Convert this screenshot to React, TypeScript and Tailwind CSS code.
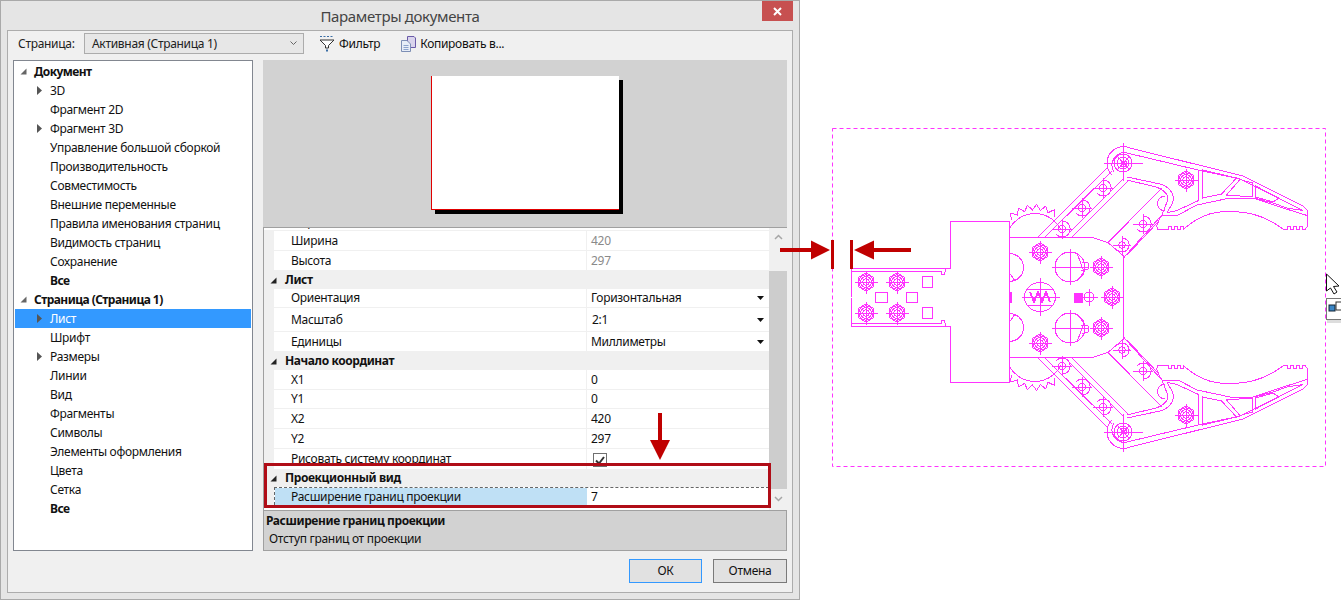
import React from "react";

const treeRows = [
  { label: "Документ", bold: true, open: true },
  { label: "3D", arrow: true },
  { label: "Фрагмент 2D" },
  { label: "Фрагмент 3D", arrow: true },
  { label: "Управление большой сборкой" },
  { label: "Производительность" },
  { label: "Совместимость" },
  { label: "Внешние переменные" },
  { label: "Правила именования страниц" },
  { label: "Видимость страниц" },
  { label: "Сохранение" },
  { label: "Все", leafBold: true },
  { label: "Страница (Страница 1)", bold: true, open: true },
  { label: "Лист", arrow: true, selected: true },
  { label: "Шрифт" },
  { label: "Размеры", arrow: true },
  { label: "Линии" },
  { label: "Вид" },
  { label: "Фрагменты" },
  { label: "Символы" },
  { label: "Элементы оформления" },
  { label: "Цвета" },
  { label: "Сетка" },
  { label: "Все", leafBold: true },
];

const OpenMark = ({ className }: { className: string }) => (
  <svg width="7" height="7" viewBox="0 0 7 7" className={className}>
    <path d="M6.5 0.5V6.5H0.5Z" fill="currentColor" />
  </svg>
);

const ClosedMark = () => (
  <svg width="5" height="9" viewBox="0 0 5 9" className="text-[#555]">
    <path d="M0 0L5 4.5L0 9Z" fill="currentColor" />
  </svg>
);

const TreeRow = ({ row }: { row: (typeof treeRows)[number] }) => {
  if (row.bold) {
    return (
      <div className="h-[19px] flex items-center pl-[5px] font-bold text-[#111] tracking-[-0.55px]">
        <OpenMark className="text-[#666] w-[7px]" />
        <span className="ml-[7px]">{row.label}</span>
      </div>
    );
  }
  return (
    <div className={`h-[19px] flex items-center ${row.selected ? "bg-[#3399ff] text-white" : "text-[#111]"}`}>
      <div className="w-[35px] pl-[22px] flex items-center shrink-0">{row.arrow && <ClosedMark />}</div>
      <span className={row.leafBold ? "font-bold tracking-[-0.55px]" : ""}>{row.label}</span>
    </div>
  );
};

const DropMark = () => (
  <svg width="7" height="4" viewBox="0 0 7 4" className="absolute right-[5px] top-1/2 -mt-[2px]">
    <path d="M0 0H7L3.5 4Z" fill="#111" />
  </svg>
);

const PropRow = ({
  label,
  value,
  height,
  gray,
  drop,
  inset,
}: {
  label: string;
  value?: string;
  height: string;
  gray?: boolean;
  drop?: boolean;
  inset?: boolean;
}) => (
  <div className={`flex ${height} shrink-0`}>
    <div className="w-[10px] bg-[#f0f0f0] shrink-0" />
    <div className="flex-1 flex bg-white border-b border-[#f0f0f0]">
      <div className="w-[313px] pl-[17px] flex items-center border-r border-[#f0f0f0] text-[#111]">{label}</div>
      <div className={`relative flex-1 flex items-center ${inset ? "pl-[5px]" : "pl-[4px]"} ${gray ? "text-[#8a8a8a]" : "text-[#111]"}`}>
        {value}
        {drop && <DropMark />}
      </div>
    </div>
  </div>
);

const PropHeader = ({ label }: { label: string }) => (
  <div className="h-[18px] shrink-0 bg-[#f0f0f0] flex items-center pl-[6px] font-bold text-[#111] tracking-[-0.4px]">
    <OpenMark className="text-[#222] w-[7px]" />
    <span className="ml-[8px]">{label}</span>
  </div>
);

const FilterIcon = () => (
  <svg width="16" height="18" viewBox="0 0 16 18" className="shrink-0">
    <path d="M1 1.5H15" stroke="#3b6ea5" strokeDasharray="2 1.5" />
    <path d="M1 5H15L9.5 10.5V13H6.5V10.5Z" fill="#fff" stroke="#333" />
    <path d="M7 15.5H9" stroke="#3b6ea5" strokeWidth="2" />
  </svg>
);

const CopyIcon = () => (
  <svg width="15" height="16" viewBox="0 0 15 16" className="shrink-0">
    <path d="M6.5 0.5H13L14.5 2V11.5H6.5Z" fill="#d9d4ec" stroke="#6a5aa8" />
    <path d="M0.5 4.5H6L9.5 8V15.5H0.5Z" fill="#e7edf7" stroke="#7d8fb5" />
    <path d="M2.5 9.5H7.5M2.5 11.5H7.5M2.5 13.5H7.5" stroke="#8da3cc" />
  </svg>
);

const Dialog = () => (
  <div className="w-[800px] h-[600px] shrink-0 border border-[#a9a9a9] bg-[#e5e5e5] px-[6px] pb-[6px] flex flex-col">
    <div className="h-[29px] shrink-0 flex items-start">
      <div className="w-[31px]" />
      <div className="flex-1 text-center text-[15px] leading-[30px] text-[#444] tracking-[-0.35px]">Параметры документа</div>
      <div className="w-[31px] h-[20px] bg-[#c75050] flex items-center justify-center">
        <svg width="9" height="9" viewBox="0 0 9 9">
          <path d="M1 1L8 8M8 1L1 8" stroke="#fff" strokeWidth="2" />
        </svg>
      </div>
    </div>
    <div className="flex-1 border border-[#acacac] bg-[#f0f0f0] px-[5px] flex flex-col min-h-0">
      <div className="h-[21px] mt-[2px] shrink-0 flex items-center">
        <span className="w-[71px] pl-[5px] text-[#222]">Страница:</span>
        <div className="relative w-[220px] h-[21px] border border-[#acacac] bg-[#e7e7e7] flex items-center pl-[7px] text-[#222]">
          Активная (Страница 1)
          <svg width="7" height="5" viewBox="0 0 7 5" className="absolute right-[6px] top-[7px]">
            <path d="M0.5 0.5L3.5 3.5L6.5 0.5" stroke="#666" fill="none" />
          </svg>
        </div>
        <div className="ml-[15px] flex items-center gap-[4px] text-[#111]">
          <FilterIcon />
          Фильтр
        </div>
        <div className="ml-[21px] flex items-center gap-[4px] text-[#111]">
          <CopyIcon />
          Копировать в...
        </div>
      </div>
      <div className="flex mt-[6px] h-[491px] shrink-0">
        <div className="w-[240px] shrink-0 border border-[#828790] bg-white p-[1px]">
          {treeRows.map((row, i) => (
            <TreeRow key={i} row={row} />
          ))}
        </div>
        <div className="ml-[10px] flex-1 flex flex-col min-w-0">
          <div className="h-[167px] shrink-0 bg-[#d2d2d2] pl-[168px] pt-[16px]">
            <div className="w-[188px] h-[134px] bg-white border-l border-b border-[#e00000] shadow-[4px_4px_0_#000]" />
          </div>
          <div className="relative h-[283px] shrink-0 flex border-t border-l border-[#a0a0a0] bg-white">
            <div className="flex-1 flex flex-col min-w-0">
              <div className="h-[3px] shrink-0 overflow-hidden flex items-end pl-[27px] border-b border-[#f0f0f0] text-[#111]">
                <span className="shrink-0 leading-[16px]">Формат</span>
              </div>
              <PropRow label="Ширина" value="420" gray height="h-[20px]" />
              <PropRow label="Высота" value="297" gray height="h-[20px]" />
              <PropHeader label="Лист" />
              <PropRow label="Ориентация" value="Горизонтальная" drop height="h-[19px]" />
              <PropRow label="Масштаб" value="2:1" drop inset height="h-[24px]" />
              <PropRow label="Единицы" value="Миллиметры" drop height="h-[20px]" />
              <PropHeader label="Начало координат" />
              <PropRow label="X1" value="0" height="h-[20px]" />
              <PropRow label="Y1" value="0" height="h-[19px]" />
              <PropRow label="X2" value="420" height="h-[20px]" />
              <PropRow label="Y2" value="297" height="h-[20px]" />
              <div className="flex h-[20px] shrink-0">
                <div className="w-[10px] bg-[#f0f0f0] shrink-0" />
                <div className="flex-1 flex bg-white">
                  <div className="w-[313px] pl-[17px] flex items-center border-r border-[#f0f0f0] text-[#111]">Рисовать систему координат</div>
                  <div className="pl-[6px] pt-[4px]">
                    <div className="w-[14px] h-[14px] border border-[#707070] flex items-center justify-center">
                      <svg width="10" height="9" viewBox="0 0 10 9">
                        <path d="M1 4.5L4 7.5L9 1" stroke="#333" strokeWidth="2" fill="none" />
                      </svg>
                    </div>
                  </div>
                </div>
              </div>
              <PropHeader label="Проекционный вид" />
              <div className="flex h-[18px] shrink-0">
                <div className="w-[10px] bg-[#f0f0f0] shrink-0" />
                <div className="flex-1 flex border-t border-l border-dashed border-[#666]">
                  <div className="w-[312px] pl-[16px] flex items-center bg-[#bfe0f5] text-[#111]">Расширение границ проекции</div>
                  <div className="flex-1 pl-[4px] flex items-center bg-white text-[#111]">7</div>
                </div>
              </div>
            </div>
            <div className="w-[18px] shrink-0 flex flex-col items-center bg-[#f0f0f0]">
              <div className="h-[43px] w-full flex justify-center pt-[6px]">
                <svg width="9" height="6" viewBox="0 0 9 6">
                  <path d="M1 5L4.5 1.5L8 5" stroke="#a6a6a6" strokeWidth="1.5" fill="none" />
                </svg>
              </div>
              <div className="h-[218px] w-full bg-[#cdcdcd]" />
              <div className="flex-1 w-full flex justify-center pt-[7px]">
                <svg width="9" height="6" viewBox="0 0 9 6">
                  <path d="M1 1L4.5 4.5L8 1" stroke="#a6a6a6" strokeWidth="1.5" fill="none" />
                </svg>
              </div>
            </div>
            <div className="absolute left-0 top-[235px] w-[507px] h-[45px] border-[3px] border-[#b00d17]" />
            <svg width="22" height="48" viewBox="0 0 22 48" className="absolute left-[385px] top-[185px]">
              <path d="M9 0H13V27H21L11 47L1 27H9Z" fill="#c00000" />
            </svg>
          </div>
          <div className="flex-1 border border-[#a0a0a0] bg-[#d2d2d2] text-[#111] leading-[17px] pt-[1px]">
            <div className="pl-[2px] font-bold tracking-[-0.4px]">Расширение границ проекции</div>
            <div className="pl-[5px] mt-[1px]">Отступ границ от проекции</div>
          </div>
        </div>
      </div>
      <div className="flex justify-end mt-[8px] gap-[11px]">
        <div className="w-[73px] h-[24px] border border-[#3399ff] bg-[#e1e1e1] flex items-center justify-center text-[#111]">ОК</div>
        <div className="w-[74px] h-[24px] border border-[#7a7a7a] bg-[#e1e1e1] flex items-center justify-center text-[#111]">Отмена</div>
      </div>
    </div>
  </div>
);

const Bolt = ({ x, y, r = 9 }: { x: number; y: number; r?: number }) => {
  const hex = [0, 1, 2, 3, 4, 5]
    .map((i) => {
      const a = (Math.PI / 3) * i + Math.PI / 6;
      return `${x + r * Math.cos(a)},${y + r * Math.sin(a)}`;
    })
    .join(" ");
  return (
    <g>
      <polygon points={hex} />
      <circle cx={x} cy={y} r={r * 0.8} />
      <circle cx={x} cy={y} r={r * 0.6} />
      <circle cx={x} cy={y} r={r * 0.35} />
      <path d={`M${x - r - 2.5} ${y}H${x + r + 2.5}M${x} ${y - r - 2.5}V${y + r + 2.5}`} />
    </g>
  );
};

const Hole = ({ x, y, r = 8 }: { x: number; y: number; r?: number }) => (
  <g>
    <path d={`M${x} ${y - r}A${r} ${r} 0 1 1 ${x - r * 0.7} ${y + r * 0.7}`} />
    <circle cx={x} cy={y} r={r * 0.45} />
    <path d={`M${x - r - 2} ${y}H${x + r + 2}M${x} ${y - r - 2}V${y + r + 2}`} />
  </g>
);

const gearPath = (() => {
  const pts: string[] = [];
  const steps = 6;
  const from = -136;
  const to = -53;
  for (let i = 0; i <= steps * 4; i++) {
    const deg = from + ((to - from) * i) / (steps * 4);
    const rad = i % 4 === 2 ? 38.5 : i % 4 === 0 ? 33 : 35.5;
    const a = (deg * Math.PI) / 180;
    pts.push(`${(1035 + rad * Math.cos(a)).toFixed(1)} ${(243 + rad * Math.sin(a)).toFixed(1)}`);
  }
  return "M" + pts.join("L");
})();

const teeth = (fromX: number, toX: number) => {
  let d = `M${fromX} 229.5`;
  for (let x = fromX; x > toX; x -= 6) {
    d += `V226.5H${x - 3}V229.5H${x - 6}`;
  }
  return d;
};

const TopHalf = () => (
  <g>
    <path d="M851.5 297V268.5H950.5M851.5 271.5H941.5V274.5H944.5L945.5 269" />
    <Bolt x={866} y={282} />
    <Bolt x={897} y={282} />
    <rect x="922.5" y="276.5" width="10" height="11" />

    <path d="M1009.5 228.5A29 29 0 0 1 1061 230" />
    <path d={gearPath} />

    <path d="M1009.5 253.5A14 14 0 0 1 1009.5 281.5" />
    <path d="M1009.5 273L1015 281" />
    <Bolt x={1040} y={252} />
    <Bolt x={1101} y={267} />
    <circle cx="1070" cy="267" r="15" />
    <path d="M1052 267H1088M1070 249V285" />
    <path d="M1077 253L1084 272L1078 280" />
    <path d="M1082 262H1085A4 4 0 0 1 1085 270H1081" />

    <path d="M1009.5 237.5H1093L1108.5 243L1123.5 256V297" />

    <path d="M1038 237L1108 167M1045 237L1112 171M1065 237L1124 178M1072 237L1128 181" />
    <Hole x={1062} y={229} />
    <Hole x={1082} y={208} />
    <Hole x={1103} y={188} />

    <path d="M1108.5 242L1162 188M1123.5 258L1160 217M1127 255L1158 222" />
    <Hole x={1143} y={224} />
    <Hole x={1122} y={245} r={7} />
    <path d="M1165 196A7.5 7.5 0 1 0 1165 211" />

    <path d="M1130 148L1243 176L1303 206L1307 210V227L1305 229.5H1302" />
    <path d={teeth(1302, 1284)} />
    <path d="M1284 229.5L1280 227C1262 214 1245 211.5 1228 211.5C1210 211.5 1198 217 1183 229.5" />
    <path d={teeth(1183, 1165)} />
    <path d="M1165 229.5H1158L1156.5 226L1160 218L1162 215H1178L1197 205L1230 198H1253L1280 207L1307 215.5" />
    <path d="M1127 153L1198 170L1240 179L1303 210.5L1287 208L1273 203L1254 198" />
    <path d="M1198.5 170V200.5L1177 210.5L1167 212.7" />
    <path d="M1127 177L1160 184C1170 187 1176 195 1172 204L1167 213" />
    <path d="M1127 180L1156 187C1165 190 1170 196 1167 202L1162 215" />
    <path d="M1202.5 170L1236.5 178L1221.5 194L1202.5 198Z" />
    <path d="M1240 179.5L1252.5 183V197L1226.5 195Z" />
    <path d="M1255.5 186L1279 198L1273 202L1255.5 197Z" />

    <path d="M1130 148A16.5 16.5 0 0 0 1112 175M1127 153A12.5 12.5 0 0 0 1114 172" />
    <circle cx="1123" cy="163" r="9" />
    <circle cx="1123" cy="163" r="6" />
    <circle cx="1124" cy="164" r="3" />
    <path d="M1104 163H1143M1123.5 143V181M1117 156L1130 170M1130 156L1117 170" />
    <Bolt x={1186} y={180} r={9} />
  </g>
);

const Drawing = () => (
  <svg width="541" height="600" viewBox="800 0 541 600" className="shrink-0">
    <rect x="832.5" y="128.5" width="493" height="338" fill="none" stroke="#ff33ff" strokeDasharray="4 3" />
    <g fill="none" stroke="#ff33ff" strokeWidth="1" shapeRendering="crispEdges">
      <TopHalf />
      <g transform="matrix(1 0 0 -1 0 595)">
        <TopHalf />
      </g>
      <path d="M950.5 268.5V221.5H1009.5V382.5H950.5V326" />
      <path d="M875.5 292.5H887.5V302.5H875.5ZM906.5 292.5H917.5V302.5H906.5Z" />
      <ellipse cx="1040" cy="297" rx="15.5" ry="14.5" />
      <path d="M1022 297H1060M1040 278V316M1027 289H1053M1027 305H1053" />
      <path d="M1030 292L1034 302L1038 292L1042 302L1046 292L1050 302" strokeWidth="2" />
      <Bolt x={1112} y={297} />
      <circle cx="1089" cy="297" r="5" />
      <path d="M1081 297H1098M1089 289V306" />
      <rect x="1074" y="293" width="8" height="9" fill="#ff33ff" />
      <rect x="1009" y="292" width="2" height="10" fill="#ff33ff" />
    </g>
    <path
      d="M1326.5 274L1339 286L1333.5 286.5L1337 292L1334 294L1330.5 288L1326.5 291Z"
      fill="#fff"
      stroke="#111"
    />
    <rect x="1326.5" y="298.5" width="20" height="21" fill="#fff" stroke="#777" />
    <rect x="1329" y="305" width="6" height="6" fill="#3b86c6" stroke="#123" />
    <rect x="1336" y="302" width="8" height="8" fill="none" stroke="#333" />
    <rect x="1327" y="320" width="20" height="3" fill="#ddd" />
  </svg>
);

export default function App() {
  return (
    <div className="relative w-[1341px] h-[600px] overflow-hidden flex bg-white text-[12px] tracking-[-0.3px] font-['Noto_Sans',sans-serif]">
      <Dialog />
      <Drawing />
      <svg width="135" height="30" viewBox="780 240 135 30" className="absolute left-[780px] top-[240px]">
        <g fill="#c00000">
          <path d="M780 248H811V240.5L830 250L811 259.5V252H780Z" />
          <rect x="831" y="240" width="3" height="29" />
          <rect x="850" y="240" width="3" height="29" />
          <path d="M911 248H874V240.5L854 250L874 259.5V252H911Z" />
        </g>
      </svg>
    </div>
  );
}
